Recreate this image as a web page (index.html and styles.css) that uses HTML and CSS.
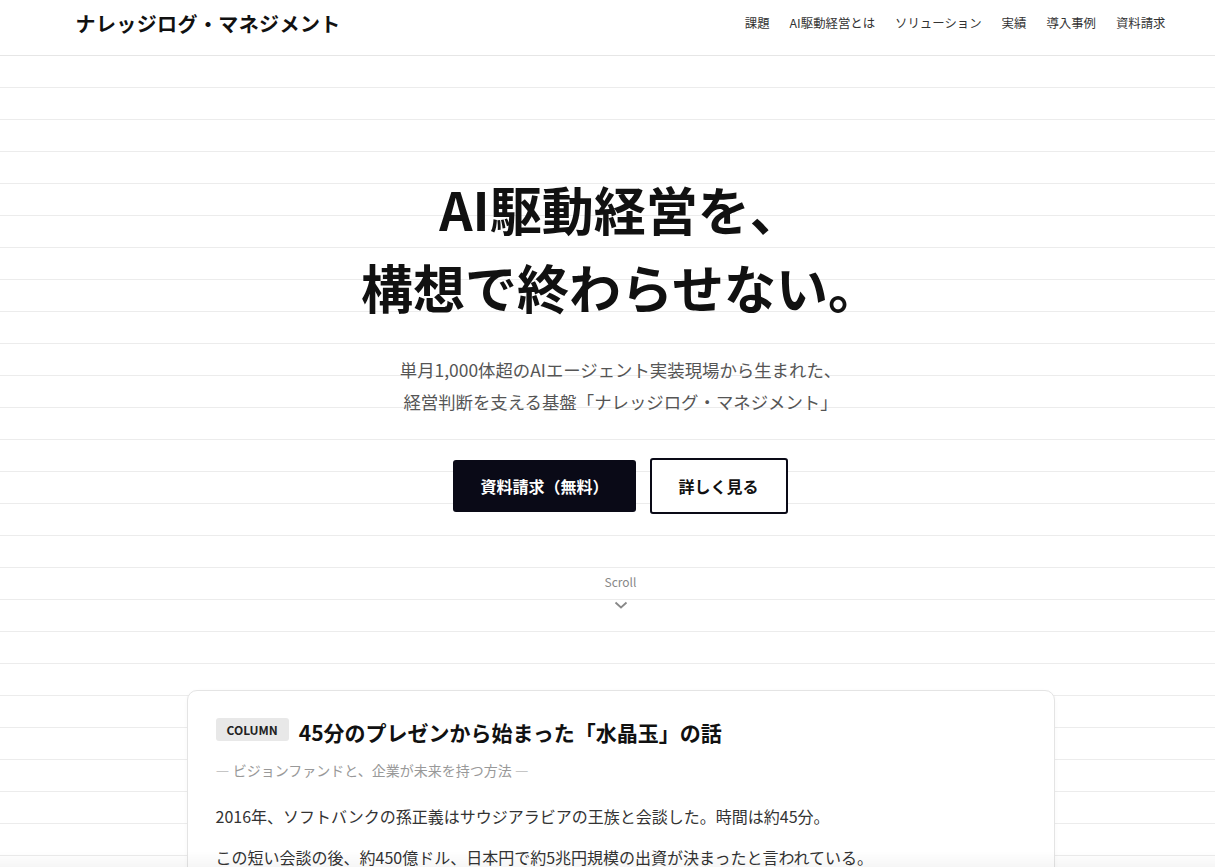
FILE: index.html
```html
<!DOCTYPE html>
<html lang="ja">

<head>
	<meta charset="UTF-8">
	<meta name="viewport" content="width=device-width, initial-scale=1.0">
	<title>ナレッジログ・マネジメント</title>
	<link rel="stylesheet" href="styles.css">
</head>

<body>
	<div class="page">
		<header class="site-header">
			<div class="container header-inner">
				<a class="logo" href="#">ナレッジログ・マネジメント</a>
				<nav class="nav">
					<a href="#">課題</a>
					<a href="#">AI駆動経営とは</a>
					<a href="#">ソリューション</a>
					<a href="#">実績</a>
					<a href="#">導入事例</a>
					<a href="#">資料請求</a>
				</nav>
			</div>
		</header>

		<main class="main">
			<section class="hero">
				<h1 class="hero-title">AI駆動経営を、<br>構想で終わらせない。</h1>
				<p class="hero-lead">単月1,000体超のAIエージェント実装現場から生まれた、<br>経営判断を支える基盤「ナレッジログ・マネジメント」</p>
				<div class="hero-actions">
					<a class="btn btn-dark" href="#">資料請求（無料）</a>
					<a class="btn btn-outline" href="#">詳しく見る</a>
				</div>
				<div class="scroll">
					<span>Scroll</span>
					<svg width="14" height="9" viewBox="0 0 14 9">
						<path d="M1.5 1.5 L7 6.5 L12.5 1.5" fill="none" stroke="#888" stroke-width="1.8" />
					</svg>
				</div>
			</section>

			<section class="column">
				<article class="column-card">
					<div class="column-head">
						<span class="badge">COLUMN</span>
						<h2 class="column-title">45分のプレゼンから始まった「水晶玉」の話</h2>
					</div>
					<p class="column-sub">— ビジョンファンドと、企業が未来を持つ方法 —</p>
					<p class="column-text">2016年、ソフトバンクの孫正義はサウジアラビアの王族と会談した。時間は約45分。</p>
					<p class="column-text">この短い会談の後、約450億ドル、日本円で約5兆円規模の出資が決まったと言われている。</p>
				</article>
			</section>
		</main>
		<div class="fade"></div>
	</div>
</body>

</html>
```

FILE: styles.css
```css
* {
	margin: 0;
	padding: 0;
	box-sizing: border-box;
}

body {
	font-family: 'Noto Sans CJK JP', 'Noto Sans', sans-serif;
	color: #222;
	background: #fff;
	overflow-x: hidden;
}

a {
	color: inherit;
	text-decoration: none;
}

.page {
	width: 1241px;
}

.container {
	width: 1090px;
	margin: 0 auto;
}

.site-header {
	height: 56px;
	border-bottom: 1px solid #e6e6e6;
	background: #fff;
}

.header-inner {
	display: flex;
	align-items: center;
	justify-content: space-between;
	height: 47px;
}

.logo {
	font-size: 20px;
	font-weight: 700;
	color: #111;
	letter-spacing: 0.02em;
}

.nav {
	display: flex;
	gap: 20px;
	font-size: 12.4px;
	color: #333;
	margin-top: -2px;
}

.main {
	background: repeating-linear-gradient(to bottom, transparent 0, transparent 31px, #ececec 31px, #ececec 32px);
}

.hero {
	padding: 114px 0 80px;
	text-align: center;
}

.hero-title {
	font-size: 52px;
	font-weight: 700;
	line-height: 78px;
	color: #111;
}

.hero-lead {
	margin-top: 28px;
	font-size: 17.4px;
	line-height: 31.5px;
	color: #555;
}

.hero-actions {
	display: flex;
	justify-content: center;
	align-items: center;
	gap: 14px;
	margin-top: 41px;
}

.btn {
	display: inline-flex;
	align-items: center;
	justify-content: center;
	font-size: 16px;
	font-weight: 700;
	border-radius: 3px;
}

.btn-dark {
	height: 52px;
	padding: 0 27px;
	background: #0a0a17;
	color: #fff;
}

.btn-outline {
	height: 56px;
	padding: 0 27px;
	border: 2px solid #0a0a17;
	background: #fff;
	color: #111;
}

.scroll {
	display: flex;
	flex-direction: column;
	align-items: center;
	margin-top: 59px;
	font-size: 12px;
	line-height: 18px;
	color: #888;
}

.scroll svg {
	margin-top: 10px;
}

.column {
	padding-bottom: 60px;
}

.column-card {
	width: 868px;
	margin: 0 auto;
	padding: 26px 28px 40px;
	background: #fff;
	border: 1px solid #e4e4e4;
	border-radius: 10px;
	box-shadow: 0 1px 4px rgba(0, 0, 0, .03);
}

.column-head {
	display: flex;
	align-items: flex-start;
	gap: 10px;
}

.badge {
	display: inline-block;
	height: 23px;
	margin-top: 1px;
	padding: 0 11px;
	line-height: 23px;
	font-size: 12px;
	font-weight: 700;
	color: #222;
	background: #e8e8e8;
	border-radius: 3px;
}

.column-title {
	font-size: 21px;
	font-weight: 700;
	line-height: 30px;
	color: #111;
}

.column-sub {
	margin-top: 12px;
	font-size: 14px;
	line-height: 22px;
	color: #999;
}

.column-text {
	margin-top: 12px;
	font-size: 16px;
	line-height: 29px;
	color: #333;
}

.column-sub + .column-text {
	margin-top: 21px;
}

.fade {
	position: fixed;
	left: 0;
	right: 0;
	bottom: 0;
	height: 16px;
	background: linear-gradient(to bottom, rgba(0, 0, 0, 0), rgba(0, 0, 0, .035));
	pointer-events: none;
}
```
